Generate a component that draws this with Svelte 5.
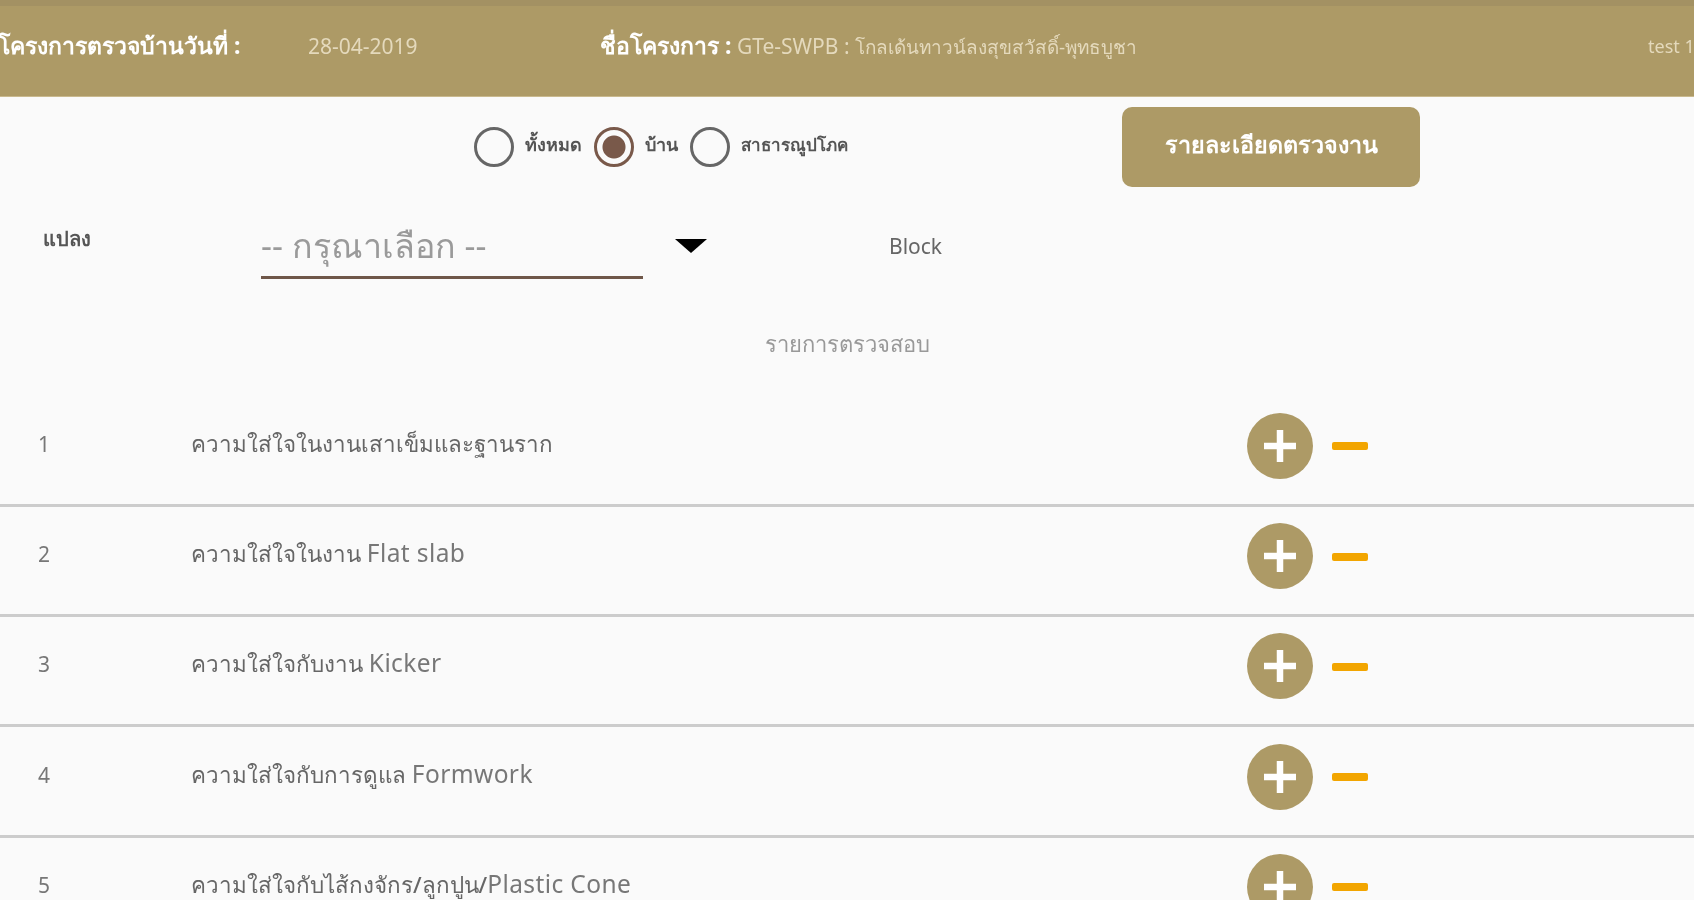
<script>
  const items = [
    { th: 'ความใส่ใจในงานเสาเข็มและฐานราก', en: '' },
    { th: 'ความใส่ใจในงาน ', en: 'Flat slab' },
    { th: 'ความใส่ใจกับงาน ', en: 'Kicker' },
    { th: 'ความใส่ใจกับการดูแล ', en: 'Formwork' },
    { th: 'ความใส่ใจกับไส้กงจักร/ลูกปูน/', en: 'Plastic Cone' }
  ];
  const radios = [
    { label: 'ทั้งหมด', checked: false },
    { label: 'บ้าน', checked: true },
    { label: 'สาธารณูปโภค', checked: false }
  ];
</script>

<div class="page">
  <header class="top">
    <div class="schedule"><b>โครงการตรวจบ้านวันที่ :</b></div>
    <div class="date">28-04-2019</div>
    <div class="project"><b>ชื่อโครงการ :</b> GTe-SWPB : <span class="pname">โกลเด้นทาวน์ลงสุขสวัสดิ์-พุทธบูชา</span></div>
    <div class="user">test 1</div>
  </header>

  <section class="controls">
    <div class="radios">
      {#each radios as r}
        <span class="radio" class:on={r.checked}></span>
        <span class="rlabel">{r.label}</span>
      {/each}
    </div>
    <button class="detail">รายละเอียดตรวจงาน</button>
  </section>

  <section class="filters">
    <span class="plot">แปลง</span>
    <div class="select">-- กรุณาเลือก --</div>
    <span class="arrow"></span>
    <span class="block">Block</span>
  </section>

  <div class="title">รายการตรวจสอบ</div>

  <div class="list">
    {#each items as item, i}
      <div class="row">
        <span class="num">{i + 1}</span>
        <span class="name">{item.th}<span class="latin">{item.en}</span></span>
        <span class="plus">
          <svg viewBox="0 0 66 66" width="66" height="66" aria-hidden="true">
            <circle cx="33" cy="33" r="33" fill="#ad9a66" />
            <path d="M33 17v32M17 33h32" stroke="#fff" stroke-width="6.5" />
          </svg>
        </span>
        <span class="minus"></span>
      </div>
    {/each}
  </div>
</div>

<style>
  :global(body) {
    margin: 0;
    background: #fafafa;
  }
  .page {
    width: 1694px;
    height: 900px;
    overflow: hidden;
    background: #fafafa;
    font-family: "Noto Sans", "DejaVu Sans", sans-serif;
    filter: blur(0.7px);
  }
  .top {
    height: 97px;
    box-sizing: border-box;
    border-top: 6px solid #a39163;
    border-bottom: 1px solid #c9b98e;
    background: #ad9a66;
    display: flex;
    align-items: center;
    padding-bottom: 11px;
    color: #e4d9bc;
    font-size: 21px;
    white-space: nowrap;
  }
  .schedule {
    width: 310px;
    margin-left: -2px;
    flex: none;
    font-size: 23px;
    color: #fff;
  }
  .date {
    width: 292px;
    flex: none;
  }
  .project {
    width: 1048px;
    flex: none;
  }
  .project b {
    color: #fff;
    font-size: 23px;
  }
  .pname {
    font-size: 18.9px;
  }
  .user {
    flex: none;
    font-size: 18px;
  }
  .controls {
    height: 80px;
    margin-top: 10px;
    display: flex;
    align-items: center;
  }
  .radios {
    width: 1122px;
    flex: none;
    box-sizing: border-box;
    padding-left: 474px;
    display: flex;
    align-items: center;
    gap: 11px;
    font-size: 18px;
    font-weight: 600;
    color: #555;
  }
  .rlabel {
    margin-top: -5px;
    margin-right: 1px;
  }
  .rlabel:last-child {
    font-size: 17px;
  }
  .radio {
    width: 40px;
    height: 40px;
    box-sizing: border-box;
    border: 3px solid #666;
    border-radius: 50%;
    flex: none;
  }
  .radio.on {
    border-color: #79594a;
    background: radial-gradient(circle, #79594a 0 11px, transparent 12px);
  }
  .detail {
    width: 298px;
    height: 80px;
    border: 0;
    border-radius: 10px;
    background: #ad9a66;
    color: #fff;
    font: 600 23.3px "Noto Sans", "DejaVu Sans", sans-serif;
    padding: 0 0 6px;
  }
  .filters {
    height: 90px;
    margin-top: 14px;
    display: flex;
    align-items: center;
  }
  .plot {
    width: 218px;
    margin-left: 43px;
    font-size: 20px;
    font-weight: 600;
    color: #555;
    margin-top: -15px;
    flex: none;
  }
  .select {
    width: 382px;
    height: 62px;
    flex: none;
    border-bottom: 3px solid #6f5749;
    color: #9a9a9a;
    font-size: 34px;
    line-height: 62px;
    white-space: nowrap;
  }
  .arrow {
    width: 0;
    height: 0;
    flex: none;
    margin: 0 182px 0 32px;
    border-left: 16px solid transparent;
    border-right: 16px solid transparent;
    border-top: 14px solid #000;
  }
  .block {
    font-size: 21px;
    color: #666;
  }
  .title {
    height: 104px;
    text-align: center;
    line-height: 104px;
    font-size: 22px;
    color: #999;
  }
  .list {
    margin-top: 1.6px;
  }
  .row {
    height: 98.3px;
    padding-bottom: 9px;
    border-bottom: 3px solid #ccc;
    display: flex;
    align-items: center;
  }
  .num {
    width: 153px;
    margin-left: 38px;
    margin-top: -4px;
    flex: none;
    font-size: 21px;
    color: #777;
  }
  .name {
    width: 1056px;
    margin-top: -4px;
    flex: none;
    font-size: 22.4px;
    font-weight: 500;
    color: #666;
    white-space: nowrap;
  }
  .latin {
    font-size: 24.5px;
    font-weight: 400;
    letter-spacing: 0.4px;
    color: #777;
  }
  .plus {
    width: 66px;
    height: 66px;
    flex: none;
  }
  .minus {
    width: 36px;
    height: 8px;
    margin-left: 19px;
    margin-top: 1px;
    flex: none;
    background: #f2a500;
    border-radius: 2px;
  }
</style>
